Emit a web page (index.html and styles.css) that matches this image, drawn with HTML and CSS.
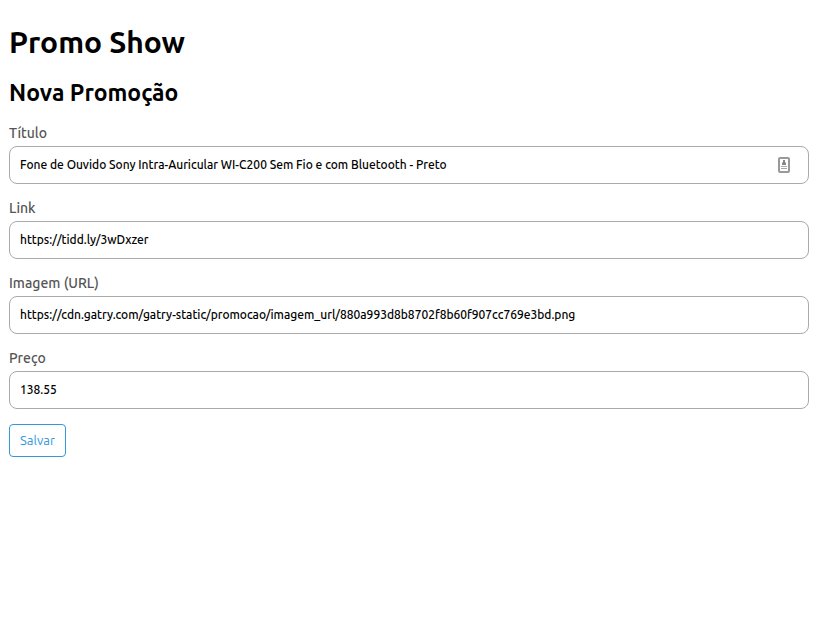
FILE: index.html
```html
<!DOCTYPE html>
<html lang="pt-BR">
<head>
<meta charset="utf-8">
<title>Promo Show</title>
<link rel="stylesheet" href="styles.css">
</head>
<body>
<main>
<h1>Promo Show</h1>
<h2>Nova Promoção</h2>
<form>
<div class="field">
<label for="title">Título</label>
<div class="control">
<input id="title" type="text" value="Fone de Ouvido Sony Intra-Auricular WI-C200 Sem Fio e com Bluetooth - Preto">
<svg class="autofill" width="12" height="16" viewBox="0 0 12 16" aria-hidden="true"><rect x="1" y="1" width="10" height="14" rx="1" fill="#fff" stroke="#999" stroke-width="2"/><path d="M5 3h2v2l1 1v2H4V6l1-1z" fill="#888"/><path d="M3 9h6v1H3zM3 11h6v1H3z" fill="#aaa"/></svg>
</div>
</div>
<div class="field">
<label for="link">Link</label>
<input id="link" type="text" value="https://tidd.ly/3wDxzer">
</div>
<div class="field">
<label for="image">Imagem (URL)</label>
<input id="image" type="text" value="https://cdn.gatry.com/gatry-static/promocao/imagem_url/880a993d8b8702f8b60f907cc769e3bd.png">
</div>
<div class="field">
<label for="price">Preço</label>
<input id="price" type="text" value="138.55">
</div>
<button type="button">Salvar</button>
</form>
</main>
</body>
</html>
```
FILE: styles.css
```css
* { box-sizing: border-box; }
body {
  margin: 0;
  padding: 24px 12px 24px 9px;
  background: #fff;
  color: #000;
  font-family: Ubuntu, "Noto Sans", "Open Sans", sans-serif;
}
h1 { margin: 0 0 18px; font-size: 30px; line-height: 36px; font-weight: 700; }
h2 { margin: 0 0 14px; font-size: 23px; line-height: 30px; font-weight: 700; }
.field + .field { margin-top: 13px; }
label {
  display: block;
  margin-bottom: 2px;
  color: #555;
  font-size: 14px;
  line-height: 22px;
  font-weight: 500;
}
input {
  display: block;
  width: 100%;
  height: 38px;
  padding: 0 10px 2px;
  border: 1px solid #aaa;
  border-radius: 8px;
  background: #fff;
  color: #000;
  font: 500 12px/16px Ubuntu, "Noto Sans", "Open Sans", sans-serif;
}
.control { position: relative; }
.autofill { position: absolute; right: 19px; top: 11px; }
button {
  display: block;
  height: 33px;
  margin-top: 15px;
  padding: 0 10px 2px;
  border: 1px solid #3498db;
  border-radius: 4px;
  background: #fff;
  color: #3498db;
  font: 13px/16px Ubuntu, "Noto Sans", "Open Sans", sans-serif;
}
```
